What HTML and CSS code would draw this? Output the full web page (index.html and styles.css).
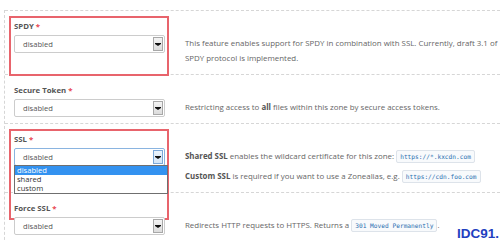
FILE: index.html
```html
<!DOCTYPE html>
<html lang="en">
<head>
  <meta charset="UTF-8">
  <title>Zone Settings</title>
  <link rel="stylesheet" href="styles.css">
</head>
<body>
  <div class="panel">
    <div class="row">
      <div class="field marked">
        <div class="label">SPDY <span class="req">*</span></div>
        <div class="select"><span class="value">disabled</span><span class="arrow"></span></div>
      </div>
      <div class="desc">
        <p>This feature enables support for SPDY in combination with SSL. Currently, draft 3.1 of SPDY protocol is implemented.</p>
      </div>
    </div>
    <div class="row">
      <div class="field">
        <div class="label">Secure Token <span class="req">*</span></div>
        <div class="select"><span class="value">disabled</span><span class="arrow"></span></div>
      </div>
      <div class="desc">
        <p>Restricting access to <b>all</b> files within this zone by secure access tokens.</p>
      </div>
    </div>
    <div class="row">
      <div class="field marked open">
        <div class="label">SSL <span class="req">*</span></div>
        <div class="select focus">
          <span class="value">disabled</span><span class="arrow"></span>
          <ul class="options">
            <li class="active">disabled</li>
            <li>shared</li>
            <li>custom</li>
          </ul>
        </div>
      </div>
      <div class="desc">
        <p><b>Shared SSL</b> enables the wildcard certificate for this zone: <code>https://*.kxcdn.com</code></p>
        <p class="next"><b>Custom SSL</b> is required if you want to use a Zonealias, e.g. <code>https://cdn.foo.com</code></p>
      </div>
    </div>
    <div class="row">
      <div class="field">
        <div class="label">Force SSL <span class="req">*</span></div>
        <div class="select"><span class="value">disabled</span><span class="arrow"></span></div>
      </div>
      <div class="desc">
        <p>Redirects HTTP requests to HTTPS. Returns a <code>301 Moved Permanently</code>.</p>
      </div>
    </div>
  </div>
  <div class="watermark">IDC91.</div>
</body>
</html>
```
FILE: styles.css
```css
html, body {
  margin: 0;
  background: #fff;
  font-family: 'Open Sans', sans-serif;
  overflow: hidden;
}
.panel {
  margin: 10px 0 0 4px;
  border-left: 1px dashed #d6d6d6;
  min-height: 240px;
}
.row {
  display: flex;
  gap: 20px;
  padding: 9px 0 6px 9px;
  border-top: 1px dashed #d6d6d6;
}
.field {
  position: relative;
  width: 151px;
  flex: none;
}
.field.marked::before {
  content: "";
  position: absolute;
  left: -5px;
  right: -4px;
  top: -4px;
  bottom: -8px;
  border: 2px solid #e8646c;
  pointer-events: none;
}
.field.open::before { bottom: -34px; }
.label {
  font-size: 7.8px;
  line-height: 12px;
  font-weight: 700;
  color: #555;
  margin-bottom: 3px;
}
.req { color: #e8454f; }
.select {
  position: relative;
  display: flex;
  height: 18px;
  box-sizing: border-box;
  border: 1px solid #ccc;
  border-radius: 2px;
  background: #fff;
}
.select .value {
  flex: 1;
  padding-left: 8px;
  font-size: 7.6px;
  line-height: 16px;
  color: #555;
}
.select .arrow {
  position: relative;
  width: 8px;
  margin: 1px;
  border: 1px solid #a8a8a8;
  background: linear-gradient(#f4f4f4, #dcdcdc);
}
.select .arrow::after {
  content: "";
  position: absolute;
  left: 1px;
  top: 6px;
  border-top: 2px solid #111;
  border-left: 3px solid transparent;
  border-right: 3px solid transparent;
}
.select .arrow::before {
  content: "";
  position: absolute;
  left: 1px;
  top: 5px;
  width: 6px;
  height: 1px;
  background: #111;
}
.select.focus { border-color: #8ab4e0; }
.select.focus .arrow {
  border-color: #7aa7d8;
  background: linear-gradient(#eaf3fc, #d3e5f7);
}
.options {
  position: absolute;
  top: 16px;
  left: -1px;
  width: 152px;
  margin: 0;
  padding: 0;
  list-style: none;
  border: 1px solid #6f6f6f;
  background: #fff;
  z-index: 2;
}
.options li {
  font-size: 7.6px;
  line-height: 9px;
  padding-left: 2px;
  color: #333;
}
.options li.active {
  background: #3392f0;
  color: #fff;
}
.desc {
  padding: 16px 0 2px;
  font-size: 7.9px;
  line-height: 15px;
  color: #666;
}
.desc p { margin: 0; }
.desc p.next { margin-top: 5px; }
.desc b { color: #555; }
code {
  font-family: 'DejaVu Sans Mono', monospace;
  font-size: 6.2px;
  color: #2a6fb0;
  background: #f8fafc;
  border: 1px solid #dde3ea;
  border-radius: 2px;
  padding: 2px 3px;
}
.watermark {
  position: absolute;
  left: 457px;
  top: 226px;
  font-family: 'Liberation Sans', sans-serif;
  font-weight: 700;
  font-size: 13.5px;
  color: #1f40c0;
}
```
